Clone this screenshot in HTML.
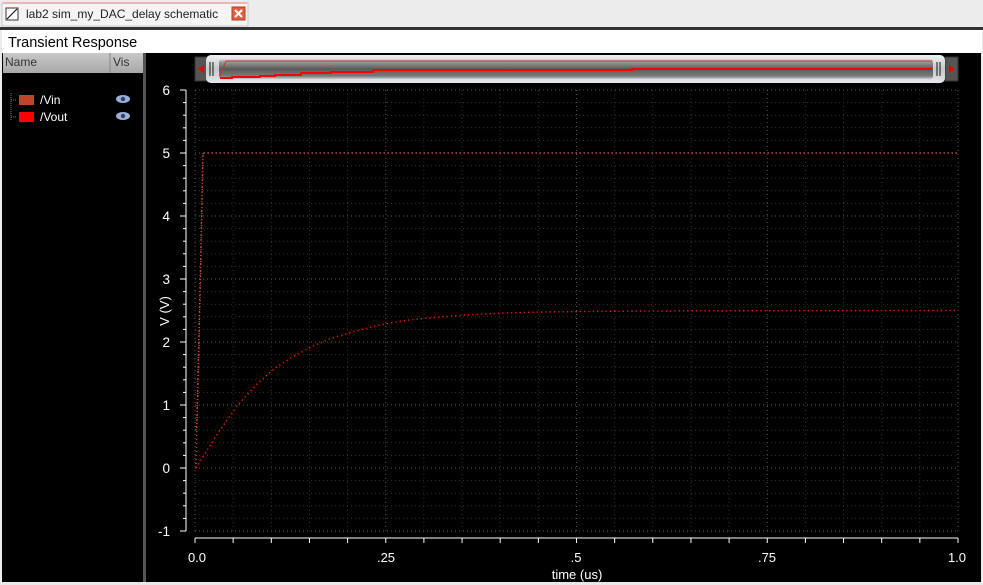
<!DOCTYPE html>
<html><head><meta charset="utf-8"><style>
html,body{margin:0;padding:0;width:983px;height:585px;overflow:hidden;background:#ececec;font-family:"Liberation Sans",sans-serif}
svg{display:block}
text{font-family:"Liberation Sans",sans-serif}
</style></head><body>
<svg width="983" height="585" viewBox="0 0 983 585" xmlns="http://www.w3.org/2000/svg">
<defs>
<linearGradient id="sb" x1="0" y1="0" x2="0" y2="1">
<stop offset="0" stop-color="#d8dde2"/><stop offset="0.15" stop-color="#9a9a9a"/><stop offset="0.5" stop-color="#5a5a5a"/><stop offset="0.85" stop-color="#7a7a7a"/><stop offset="1" stop-color="#c8ccd0"/></linearGradient>
<linearGradient id="th" x1="0" y1="0" x2="0" y2="1">
<stop offset="0" stop-color="#eef0f2"/><stop offset="0.5" stop-color="#c4c8cc"/><stop offset="1" stop-color="#e6e8ea"/></linearGradient>
<linearGradient id="hd" x1="0" y1="0" x2="0" y2="1">
<stop offset="0" stop-color="#c8c8c8"/><stop offset="1" stop-color="#a8a8a8"/></linearGradient>
</defs>
<rect x="0" y="0" width="983" height="27" fill="#ececec"/>
<rect x="2" y="3" width="246" height="23" fill="#f4f4f4" stroke="#c8c8c8"/>
<line x1="3" y1="3" x2="247" y2="3" stroke="#e08080"/>
<rect x="6" y="8" width="12" height="12" fill="#fff" stroke="#333"/>
<line x1="7" y1="19" x2="17" y2="9" stroke="#000"/>
<text x="26" y="18" font-size="12" fill="#222">lab2 sim_my_DAC_delay schematic</text>
<rect x="232" y="7" width="13" height="13" fill="#e06040" stroke="#b04020"/>
<path d="M235 10 L242 17 M242 10 L235 17" stroke="#fff" stroke-width="2"/>
<rect x="0" y="27" width="983" height="3" fill="#333"/>
<rect x="2" y="30" width="980" height="23" fill="#fff"/>
<text x="8" y="47" font-size="14.5" fill="#000">Transient Response</text>
<rect x="2" y="53" width="141" height="529" fill="#000"/>
<rect x="3" y="53" width="140" height="20" fill="url(#hd)"/>
<line x1="110" y1="53" x2="110" y2="73" stroke="#888"/>
<text x="5" y="66" font-size="12" fill="#333">Name</text>
<text x="113" y="66" font-size="12" fill="#333">Vis</text>
<path d="M11 93 V120 M11 100 H16 M11 117 H16" stroke="#777" stroke-dasharray="1 1"/>
<rect x="19" y="95" width="15" height="10" fill="#c0442a"/>
<rect x="19" y="112" width="15" height="10" fill="#ff0000"/>
<text x="40" y="104" font-size="12" fill="#fff">/Vin</text>
<text x="40" y="121" font-size="12" fill="#fff">/Vout</text>
<ellipse cx="123" cy="99" rx="7" ry="4" fill="#9ab0d8"/><circle cx="123" cy="99" r="2.2" fill="#30406a"/>
<ellipse cx="123" cy="116" rx="7" ry="4" fill="#9ab0d8"/><circle cx="123" cy="116" r="2.2" fill="#30406a"/>
<rect x="143" y="53" width="3" height="529" fill="#555"/>
<rect x="146" y="53" width="836" height="529" fill="#000"/>
<rect x="981" y="53" width="2" height="529" fill="#ececec"/>
<rect x="0" y="582" width="983" height="3" fill="#e8e8e8"/>
<rect x="195" y="57" width="13" height="24" fill="#555" stroke="#333"/>
<path d="M198 69 L204 65 V73 Z" fill="#e00"/>
<rect x="945" y="57" width="13" height="24" fill="#555" stroke="#333"/>
<path d="M955 69 L949 65 V73 Z" fill="#e00"/>
<rect x="206" y="55" width="739" height="28" rx="5" fill="url(#th)"/>
<rect x="219" y="59" width="714" height="20" rx="3" fill="url(#sb)"/>
<line x1="210" y1="62" x2="210" y2="76" stroke="#111"/><line x1="213" y1="62" x2="213" y2="76" stroke="#111"/>
<line x1="937" y1="62" x2="937" y2="76" stroke="#111"/><line x1="940" y1="62" x2="940" y2="76" stroke="#111"/>
<path d="M220 76 L226 61 H932" stroke="#d03030" fill="none"/>
<path d="M220 78 H232 V77 H260 V76 H275 V75 H301 V73 H331 V72 H373 V70 H632 V69 H932" stroke="#ff0000" fill="none" stroke-width="2"/>
<g id="grid"></g>
<line x1="186" y1="90" x2="186" y2="531" stroke="#fff"/>
<line x1="195" y1="538" x2="958" y2="538" stroke="#fff"/>
<g id="ticks"></g>
<g font-size="13.5" fill="#fff" text-anchor="end">
<text x="170" y="95">6</text><text x="170" y="158">5</text><text x="170" y="221">4</text><text x="170" y="284">3</text><text x="170" y="347">2</text><text x="170" y="410">1</text><text x="170" y="473">0</text><text x="170" y="536">-1</text>
</g>
<g font-size="13" fill="#fff" text-anchor="middle">
<text x="197" y="562">0.0</text><text x="386" y="562">.25</text><text x="576" y="562">.5</text><text x="767" y="562">.75</text><text x="957" y="562">1.0</text>
<text x="577" y="579">time (us)</text>
<text transform="translate(169,311) rotate(-90)">V (V)</text>
</g>
<polyline points="196,468 197,420 203,153 958,153" fill="none" stroke="#d04a3a" stroke-dasharray="1 3" stroke-width="1.4"/>
<polyline points="196,430 197,420 200,300 203,153" fill="none" stroke="#d04a3a" stroke-dasharray="1 2" stroke-width="1.4"/>
<polyline points="196,468 218,433 237,406 256,385 275,368 294,356 313,346 332,338 352,332 371,327 390,323 409,320 428,318 466,315 504,313 542,312 580,311.6 640,311 700,310.8 958,310.5" fill="none" stroke="#ff1010" stroke-dasharray="1.3 3" stroke-width="1.4"/>
</svg>
<script>
(function(){
var ns="http://www.w3.org/2000/svg",g=document.getElementById("grid"),t=document.getElementById("ticks");
function L(p,x1,y1,x2,y2,c,d){var l=document.createElementNS(ns,"line");l.setAttribute("x1",x1);l.setAttribute("y1",y1);l.setAttribute("x2",x2);l.setAttribute("y2",y2);l.setAttribute("stroke",c);if(d)l.setAttribute("stroke-dasharray",d);p.appendChild(l);}
for(var i=0;i<=35;i++){var y=90+i*12.6;var maj=(i%5==0);L(g,195,y,958,y,maj?"#5a5a5a":"#333","1 3");L(t,maj?180:183,y,186,y,"#fff");}
for(var j=0;j<=20;j++){var x=195+j*38.15;var maj=(j%5==0);L(g,x,90,x,531,maj?"#5a5a5a":"#333","1 3");L(t,x,538,x,543,"#fff");}
})();
</script>
</body></html>
